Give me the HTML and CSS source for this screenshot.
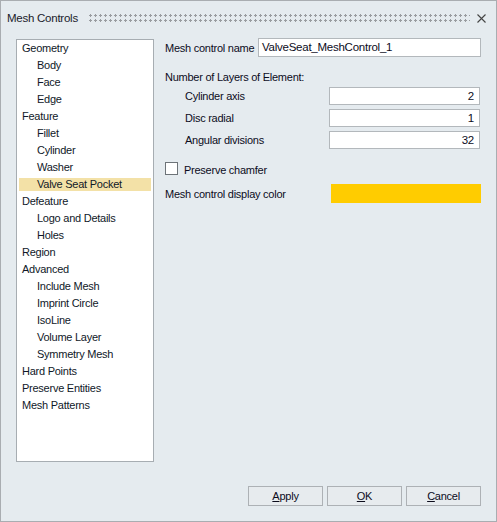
FILE: index.html
```html
<!DOCTYPE html>
<html>
<head>
<meta charset="utf-8">
<link rel="stylesheet" href="styles.css">
</head>
<body>
<div class="window">
  <div class="titlebar">
    <span class="title">Mesh Controls</span>
    <div class="grip"></div>
    <svg class="close" width="9" height="9" viewBox="0 0 9 9"><path d="M0.5 0.5 L8.5 8.5 M8.5 0.5 L0.5 8.5" stroke="#444" stroke-width="1.1" fill="none"/></svg>
  </div>
  <div class="main">
    <div class="tree">
      <div class="item top">Geometry</div>
      <div class="item child">Body</div>
      <div class="item child">Face</div>
      <div class="item child">Edge</div>
      <div class="item top">Feature</div>
      <div class="item child">Fillet</div>
      <div class="item child">Cylinder</div>
      <div class="item child">Washer</div>
      <div class="item child selected">Valve Seat Pocket</div>
      <div class="item top">Defeature</div>
      <div class="item child">Logo and Details</div>
      <div class="item child">Holes</div>
      <div class="item top">Region</div>
      <div class="item top">Advanced</div>
      <div class="item child">Include Mesh</div>
      <div class="item child">Imprint Circle</div>
      <div class="item child">IsoLine</div>
      <div class="item child">Volume Layer</div>
      <div class="item child">Symmetry Mesh</div>
      <div class="item top">Hard Points</div>
      <div class="item top">Preserve Entities</div>
      <div class="item top">Mesh Patterns</div>
    </div>
    <div class="panel">
      <div class="name-row">
        <span class="name-label">Mesh control name</span>
        <div class="field name-field">ValveSeat_MeshControl_1</div>
      </div>
      <div class="heading">Number of Layers of Element:</div>
      <div class="sub-rows">
        <div class="sub-row"><span class="sub-label">Cylinder axis</span><div class="field num">2</div></div>
        <div class="sub-row"><span class="sub-label">Disc radial</span><div class="field num">1</div></div>
        <div class="sub-row"><span class="sub-label">Angular divisions</span><div class="field num">32</div></div>
      </div>
      <div class="check-row"><span class="checkbox"></span><span class="check-label">Preserve chamfer</span></div>
      <div class="color-row"><span>Mesh control display color</span><div class="swatch"></div></div>
    </div>
  </div>
  <div class="footer">
    <div class="btn"><u>A</u>pply</div>
    <div class="btn"><u>O</u>K</div>
    <div class="btn"><u>C</u>ancel</div>
  </div>
</div>
</body>
</html>
```
FILE: styles.css
```css
html, body {
  margin: 0;
  padding: 0;
}
body {
  font-family: "Liberation Sans", Arial, sans-serif;
  font-size: 11px;
  letter-spacing: -0.25px;
  color: #0c0c1c;
  background: #e5ebef;
}
.window {
  width: 497px;
  height: 522px;
  box-sizing: border-box;
  border: 1px solid #a9adb1;
  background: #e5ebef;
  display: flex;
  flex-direction: column;
}
.titlebar {
  height: 30px;
  box-sizing: border-box;
  padding: 4px 10px 0 6px;
  display: flex;
  align-items: center;
}
.title {
  font-size: 11.5px;
  color: #1a1a2a;
  white-space: nowrap;
}
.grip {
  flex: 1;
  height: 10px;
  margin: 0 7px 0 10px;
  background-image: radial-gradient(circle, #999ca0 1px, transparent 1.4px);
  background-size: 5px 5px;
  background-position: 0 0;
}
.close {
  display: block;
}
.main {
  flex: 1;
  display: flex;
  padding: 7px 15px 0 15px;
  gap: 11px;
}
.tree {
  width: 138px;
  height: 423px;
  margin-top: 1px;
  box-sizing: border-box;
  border: 1px solid #a7adb2;
  background: #fff;
  display: flex;
  flex-direction: column;
  gap: 4px;
  padding: 2px 2px 0 2px;
  flex-shrink: 0;
}
.item {
  height: 13px;
  line-height: 13px;
  white-space: nowrap;
  color: #101828;
}
.item.top {
  padding-left: 3px;
}
.item.child {
  padding-left: 18px;
}
.item.selected {
  background: #f3e1a7;
}
.panel {
  flex: 1;
  display: flex;
  flex-direction: column;
}
.name-row {
  display: flex;
  align-items: center;
  height: 19px;
}
.name-label {
  width: 93px;
  flex-shrink: 0;
  white-space: nowrap;
}
.field {
  box-sizing: border-box;
  background: #fff;
  border: 1px solid #b3b8bc;
  white-space: nowrap;
  flex-shrink: 0;
}
.name-field {
  width: 223px;
  height: 19px;
  line-height: 17px;
  padding-left: 3px;
  font-size: 11.5px;
}
.heading {
  margin-top: 13px;
  height: 14px;
  line-height: 14px;
  white-space: nowrap;
}
.sub-rows {
  margin-top: 3px;
  display: flex;
  flex-direction: column;
  gap: 4px;
}
.sub-row {
  display: flex;
  align-items: center;
  height: 18px;
  padding-left: 20px;
}
.sub-label {
  width: 144px;
  flex-shrink: 0;
  white-space: nowrap;
}
.num {
  width: 151px;
  height: 18px;
  line-height: 16px;
  text-align: right;
  padding-right: 5px;
  font-size: 11.5px;
}
.check-row {
  margin-top: 13px;
  display: flex;
  align-items: center;
  height: 13px;
  gap: 6px;
  white-space: nowrap;
}
.check-label {
  padding-top: 3px;
}
.checkbox {
  width: 13px;
  height: 13px;
  box-sizing: border-box;
  border: 1px solid #6d7378;
  background: #fff;
}
.color-row {
  margin-top: 9px;
  display: flex;
  align-items: center;
  justify-content: space-between;
  height: 19px;
  white-space: nowrap;
}
.swatch {
  width: 150px;
  height: 19px;
  background: #ffcc00;
}
.footer {
  display: flex;
  justify-content: flex-end;
  gap: 4px;
  padding: 0 15px 15px 0;
}
.btn {
  width: 75px;
  height: 20px;
  box-sizing: border-box;
  border: 1px solid #adb1b5;
  background: #e7ebee;
  text-align: center;
  line-height: 18px;
}
```
